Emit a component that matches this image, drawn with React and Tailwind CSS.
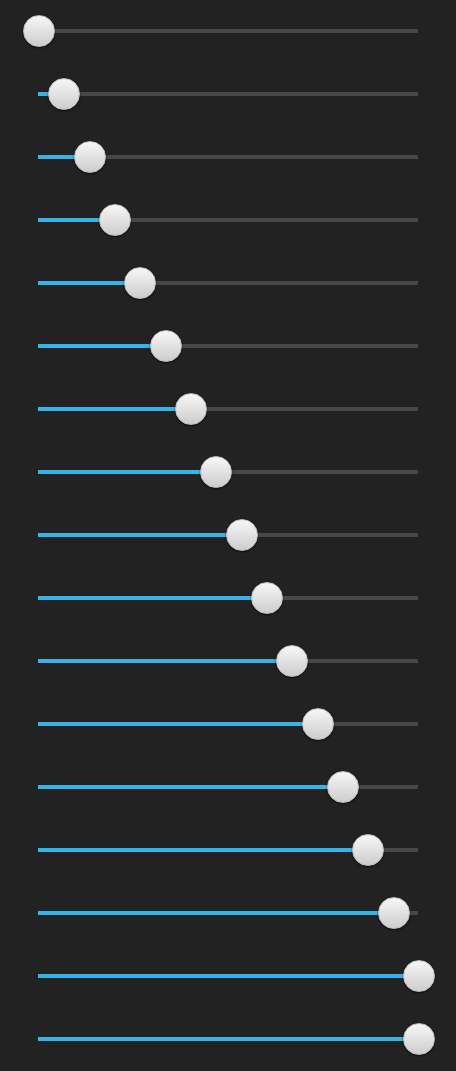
import React from "react";

const values = Array.from({ length: 17 }, (_, i) => Math.min(i, 15) / 15);

function Slider({ value }) {
  const pct = `${value * 100}%`;
  return (
    <div className="flex h-[63px] items-start px-[38px] pt-[29px]">
      <div className="relative h-[4px] w-full bg-[#474747]">
        <div className="absolute left-0 top-0 h-full bg-[#33b5e5]" style={{ width: pct }} />
        <div
          className="absolute top-1/2 h-[32px] w-[32px] translate-x-[calc(-50%+1px)] -translate-y-1/2 rounded-full border border-[#bdbdbd] bg-gradient-to-b from-[#f7f7f7] to-[#cdcdcd] shadow-[0_1px_2px_rgba(0,0,0,0.6)]"
          style={{ left: pct }}
        />
      </div>
    </div>
  );
}

export default function App() {
  return (
    <div className="flex min-h-[1071px] w-[456px] flex-col bg-[#222222]">
      {values.map((v, i) => (
        <Slider key={i} value={v} />
      ))}
    </div>
  );
}
